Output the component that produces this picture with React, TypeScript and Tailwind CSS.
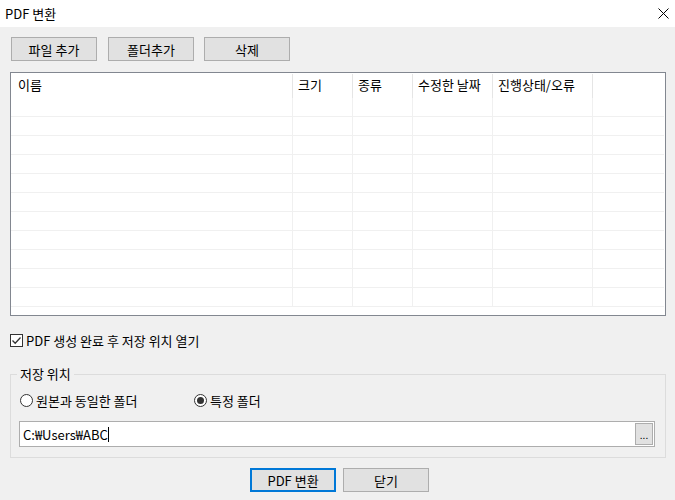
import React from "react";

const font = { fontFamily: '"Noto Sans CJK KR", "Noto Sans", sans-serif' };

const columns = [
  { label: "이름", w: "w-[282px]", pad: "pl-[7px]" },
  { label: "크기", w: "w-[60px]", pad: "pl-[5px]" },
  { label: "종류", w: "w-[60px]", pad: "pl-[5px]" },
  { label: "수정한 날짜", w: "w-[80px]", pad: "pl-[5px]" },
  { label: "진행상태/오류", w: "w-[100px]", pad: "pl-[5px]" },
];

const Button = ({ children, primary }: { children: React.ReactNode; primary?: boolean }) => (
  <button
    className={
      "w-[86px] h-[24px] bg-[#e1e1e1] text-[13px] leading-none text-black flex items-center justify-center " +
      (primary ? "border-2 border-[#0078d7]" : "border border-[#adadad]")
    }
  >
    {children}
  </button>
);

const Radio = ({ checked, label }: { checked?: boolean; label: string }) => (
  <div className="flex items-center gap-[3px]">
    <span className="w-[13px] h-[13px] rounded-full border border-[#333] bg-white flex items-center justify-center">
      {checked && <span className="w-[7px] h-[7px] rounded-full bg-[#333]" />}
    </span>
    <span className="text-[13px] leading-none">{label}</span>
  </div>
);

export default function App() {
  const rows = Array.from({ length: 11 });
  return (
    <div className="w-[675px] h-[500px] flex flex-col text-black overflow-hidden" style={font}>
      <div className="h-[27px] bg-white flex items-center justify-between pl-[5px] pr-[6px]">
        <span className="text-[13px] leading-none">PDF 변환</span>
        <svg width="11" height="11" viewBox="0 0 11 11">
          <path d="M0.5 0.5L10.5 10.5M10.5 0.5L0.5 10.5" stroke="#000" strokeWidth="1" />
        </svg>
      </div>

      <div className="flex-1 bg-[#f0f0f0] px-[10px] flex flex-col">
        <div className="flex pt-[10px] pl-[1px] gap-[10px]">
          <Button>파일 추가</Button>
          <div className="ml-[1px]">
            <Button>폴더추가</Button>
          </div>
          <Button>삭제</Button>
        </div>

        <div className="mt-[11px] w-[656px] h-[244px] border border-[#828790] bg-white overflow-hidden">
          <div className="flex h-[25px]">
            {columns.map((c) => (
              <div key={c.label} className={`${c.w} h-full flex`}>
                <div className={`flex-1 ${c.pad} pt-[5px] text-[13px] leading-[14px]`}>{c.label}</div>
                <div className="w-[1px] h-[24px] mt-[1px] bg-[#e5e5e5]" />
              </div>
            ))}
            <div className="flex-1" />
          </div>
          {rows.map((_, i) => (
            <div key={i} className="flex h-[19px] border-b border-[#f0f0f0] mr-[1px]">
              {columns.map((c) => (
                <div key={c.label} className={`${c.w} h-full border-r border-[#f0f0f0]`} />
              ))}
              <div className="flex-1" />
            </div>
          ))}
        </div>

        <div className="mt-[18px] flex items-center gap-[3px] h-[13px]">
          <span className="w-[13px] h-[13px] border border-[#333] bg-white flex items-center justify-center">
            <svg width="11" height="11" viewBox="0 0 11 11">
              <path d="M1.5 5.5L4.2 8.3L9.5 2.5" stroke="#333" strokeWidth="1.3" fill="none" />
            </svg>
          </span>
          <span className="text-[13px] leading-none">PDF 생성 완료 후 저장 위치 열기</span>
        </div>

        <fieldset className="mt-[19px] w-[656px] h-[92px] border border-[#dcdcdc] px-[8px]">
          <legend className="ml-[-2px] px-[3px] text-[13px] leading-[16px]">저장 위치</legend>
          <div className="flex items-center h-[13px] mt-[12px] pl-[1px]">
            <div className="w-[174px]">
              <Radio label="원본과 동일한 폴더" />
            </div>
            <Radio checked label="특정 폴더" />
          </div>
          <div className="mt-[14px] w-[636px] h-[26px] border border-[#adadad] bg-white flex items-center pl-[3px] pr-[1px]">
            <span className="text-[13px] leading-none">C:₩Users₩ABC</span>
            <span className="w-[1px] h-[15px] bg-black" />
            <div className="flex-1" />
            <div className="w-[18px] h-[22px] bg-[#e1e1e1] border border-[#adadad] flex items-end justify-center pb-[4px] text-[10px] leading-none">
              ...
            </div>
          </div>
        </fieldset>

        <div className="mt-[10px] flex justify-center gap-[7px] pl-[4px]">
          <Button primary>PDF 변환</Button>
          <Button>닫기</Button>
        </div>
      </div>
    </div>
  );
}
